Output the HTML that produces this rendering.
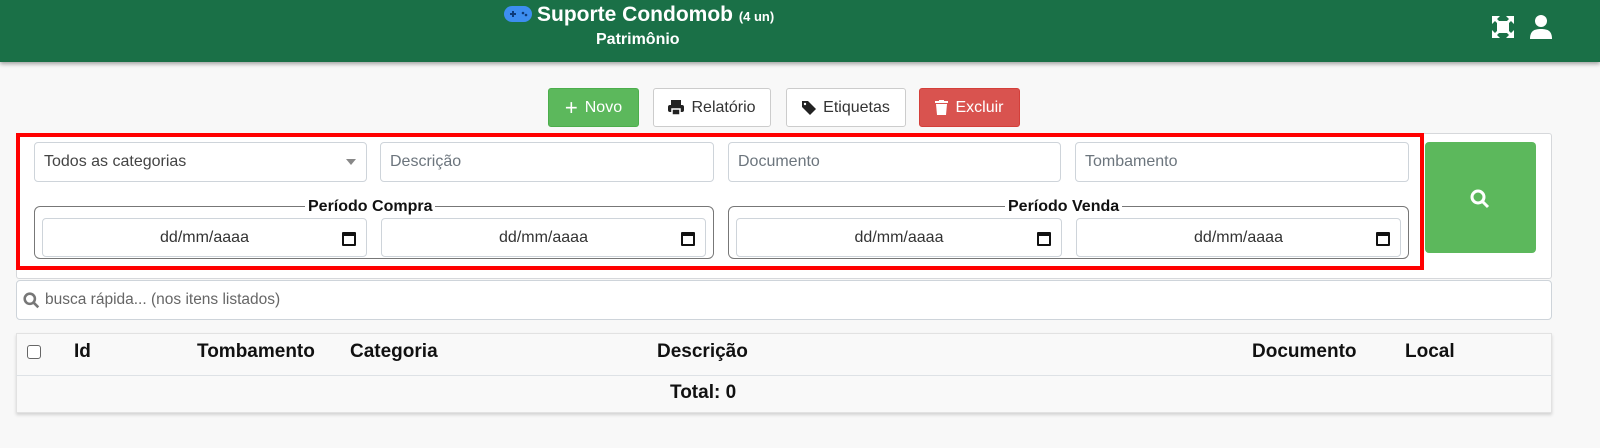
<!DOCTYPE html>
<html><head><meta charset="utf-8"><style>
*{box-sizing:border-box;margin:0;padding:0}
body{width:1600px;height:448px;background:#f8f8f8;font-family:"Liberation Sans",sans-serif;position:relative;overflow:hidden;color:#212529}
.a{position:absolute}
.hdr{left:0;top:0;width:1600px;height:62px;background:#1a7047;box-shadow:0 2px 4px rgba(0,0,0,.35)}
.btn{position:absolute;top:88px;height:39px;border-radius:3px;font-size:16px;display:flex;align-items:center;justify-content:center;gap:7px}
.inp{position:absolute;height:40px;background:#fff;border:1px solid #ced4da;border-radius:4px;font-size:16px;color:#6c757d;display:flex;align-items:center;padding-left:9px}
.date{justify-content:center;color:#333;padding:0}
.cal{position:absolute;right:10px;top:13px;width:14px;height:14px;border:2px solid #111;border-top-width:4px;border-radius:1px}
fieldset{position:absolute;border:1px solid #777;border-radius:6px}
.lg{position:absolute;top:198px;font-weight:bold;font-size:16px;background:#fff;padding:0 3px;color:#111}
.th{position:absolute;top:341px;font-weight:bold;font-size:19px;color:#111}
</style></head><body>
<div class="a hdr"></div>
<svg class="a" style="left:504px;top:6px" width="28" height="16" viewBox="0 0 28 16"><rect x="0" y="0" width="28" height="16" rx="8" fill="#3d8ef0"/><rect x="6" y="7" width="6" height="2" fill="#0d3b7a"/><rect x="8" y="5" width="2" height="6" fill="#0d3b7a"/><circle cx="19" cy="7" r="1.3" fill="#0d3b7a"/><circle cx="22" cy="9" r="1.3" fill="#0d3b7a"/></svg>
<div class="a" style="left:537px;top:3px;color:#fff;font-weight:bold;font-size:21px">Suporte Condomob <span style="font-size:13px">(4 un)</span></div>
<div class="a" style="left:596px;top:31px;color:#fff;font-weight:bold;font-size:16px">Patrimônio</div>
<svg class="a" style="left:1492px;top:16px" width="22" height="22" viewBox="0 0 22 22" fill="#fff"><path d="M0 0h8l-3 3 4 4-2 2-4-4-3 3zM22 0v8l-3-3-4 4-2-2 4-4-3-3zM0 22v-8l3 3 4-4 2 2-4 4 3 3zM22 22h-8l3-3-4-4 2-2 4 4 3-3z"/><rect x="5" y="5" width="12" height="12"/></svg>
<svg class="a" style="left:1530px;top:15px" width="22" height="24" viewBox="0 0 22 24" fill="#fff"><circle cx="11" cy="6" r="6"/><path d="M0 24c0-8 4-10 11-10s11 2 11 10z"/></svg>

<div class="btn" style="left:548px;width:91px;background:#5cb85c;color:#fff;border:1px solid #4cae4c"><span style="font-size:22px;line-height:1">+</span>Novo</div>
<div class="btn" style="left:653px;width:118px;background:#fff;border:1px solid #ccc;color:#333"><svg width="16" height="15" viewBox="0 0 16 15"><rect x="3" y="0" width="10" height="5" fill="#222"/><rect x="0" y="5" width="16" height="7" rx="2" fill="#222"/><rect x="4" y="9" width="8" height="6" fill="#222" stroke="#fff" stroke-width="1.5"/></svg>Relatório</div>
<div class="btn" style="left:786px;width:120px;background:#fff;border:1px solid #ccc;color:#333"><svg width="14" height="14" viewBox="0 0 14 14"><path d="M0 0h6l8 8-6 6-8-8z" fill="#222"/><circle cx="3" cy="3" r="1.2" fill="#fff"/></svg>Etiquetas</div>
<div class="btn" style="left:919px;width:101px;background:#d9534f;color:#fff;border:1px solid #d43f3a"><svg width="13" height="15" viewBox="0 0 13 15"><rect x="0" y="1" width="13" height="2" fill="#fff"/><rect x="4" y="0" width="5" height="2" fill="#fff"/><path d="M1 4h11l-1 11H2z" fill="#fff"/></svg>Excluir</div>

<div class="a" style="left:16px;top:133px;width:1536px;height:146px;background:#fff;border:1px solid #d6d8db;border-radius:3px"></div>
<div class="a" style="left:16px;top:133px;width:1408px;height:137px;border:4px solid #f00"></div>
<div class="inp" style="left:34px;top:142px;width:333px;color:#444">Todos as categorias<span style="position:absolute;right:10px;top:16px;border:5px solid transparent;border-top:6px solid #888"></span></div>
<div class="inp" style="left:380px;top:142px;width:334px">Descrição</div>
<div class="inp" style="left:728px;top:142px;width:333px">Documento</div>
<div class="inp" style="left:1075px;top:142px;width:334px">Tombamento</div>

<fieldset style="left:34px;top:206px;width:680px;height:53px"></fieldset>
<div class="lg" style="left:305px">Período Compra</div>
<fieldset style="left:728px;top:206px;width:681px;height:53px"></fieldset>
<div class="lg" style="left:1005px">Período Venda</div>
<div class="inp date" style="left:42px;top:218px;width:325px;height:39px">dd/mm/aaaa<span class="cal"></span></div>
<div class="inp date" style="left:381px;top:218px;width:325px;height:39px">dd/mm/aaaa<span class="cal"></span></div>
<div class="inp date" style="left:736px;top:218px;width:326px;height:39px">dd/mm/aaaa<span class="cal"></span></div>
<div class="inp date" style="left:1076px;top:218px;width:325px;height:39px">dd/mm/aaaa<span class="cal"></span></div>

<div class="a" style="left:1425px;top:142px;width:111px;height:111px;background:#5cb85c;border-radius:4px"></div>
<svg class="a" style="left:1470px;top:189px" width="20" height="20" viewBox="0 0 20 20"><circle cx="8" cy="8" r="6" fill="none" stroke="#fff" stroke-width="3"/><path d="M12 12l6 6" stroke="#fff" stroke-width="3"/></svg>

<div class="inp" style="left:16px;top:280px;width:1536px;height:40px;padding-left:6px;font-size:15.5px;color:#666"><svg width="17" height="17" viewBox="0 0 20 20" style="margin-right:5px"><circle cx="8" cy="8" r="6" fill="none" stroke="#777" stroke-width="3"/><path d="M12 12l6 6" stroke="#777" stroke-width="3"/></svg>busca rápida... (nos itens listados)</div>

<div class="a" style="left:16px;top:333px;width:1536px;height:80px;background:#f9f9f9;border:1px solid #e2e2e2;box-shadow:0 2px 3px rgba(0,0,0,.15)"></div>
<div class="a" style="left:16px;top:375px;width:1536px;height:1px;background:#dee2e6"></div>
<div class="a" style="left:27px;top:345px;width:14px;height:14px;border:1px solid #666;border-radius:3px;background:#fff"></div>
<div class="th" style="left:74px">Id</div>
<div class="th" style="left:197px">Tombamento</div>
<div class="th" style="left:350px">Categoria</div>
<div class="th" style="left:657px">Descrição</div>
<div class="th" style="left:1252px">Documento</div>
<div class="th" style="left:1405px">Local</div>
<div class="th" style="left:670px;top:382px">Total: 0</div>
</body></html>
